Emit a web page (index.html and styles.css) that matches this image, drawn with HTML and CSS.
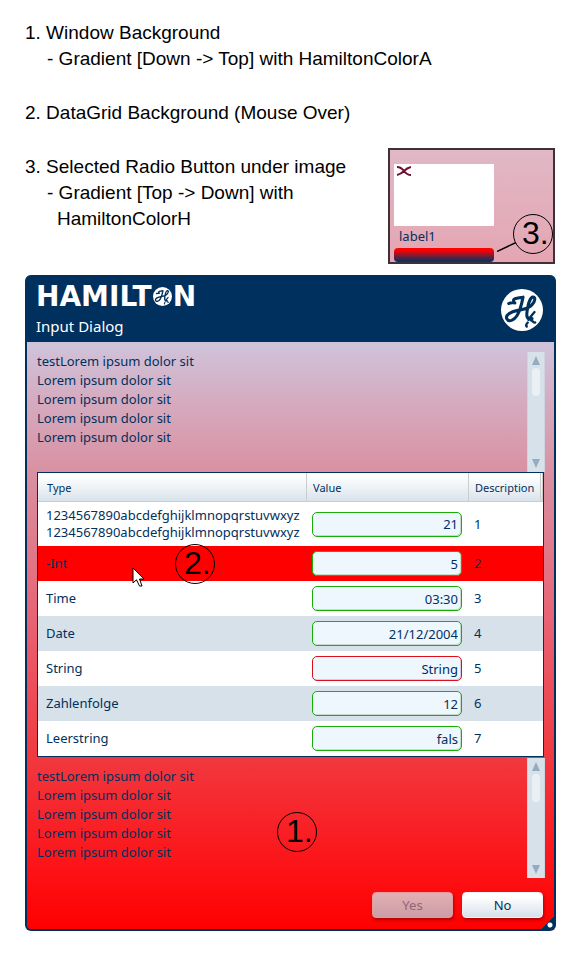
FILE: index.html
```html
<!DOCTYPE html>
<html lang="en">
<head>
<meta charset="utf-8">
<meta name="viewport" content="width=device-width, initial-scale=1">
<title>Input Dialog</title>
<link rel="stylesheet" href="styles.css">
</head>
<body>
<svg class="defs" aria-hidden="true">
  <symbol id="monogram" viewBox="0 0 124 124">
    <circle cx="62" cy="62" r="62" fill="#fff"/>
    <g fill="none" stroke="#00305d" stroke-linecap="round" stroke-linejoin="round">
      <path stroke-width="9" d="M23 43C28 39 35 41 41 41C36 37 34 31 44 28C52 26 60 25 65 24C61 45 56 65 47 79C39 92 23 99 17 88C12 76 28 68 50 63C67 59 84 58 92 46C101 35 103 24 94 24C85 25 79 51 77 66C75 79 77 89 82 86"/>
      <path stroke-width="7" d="M99 68C92 76 86 83 81 91M84 88C92 83 97 88 88 92C94 94 97 101 101 99M79 99C75 103 73 108 76 111"/>
    </g>
  </symbol>
</svg>
<main class="page">
  <section class="intro">
    <div class="notes">
      <div class="note">
        <p>1. Window Background</p>
        <p class="detail">- Gradient [Down -&gt; Top] with HamiltonColorA</p>
      </div>
      <div class="note">
        <p>2. DataGrid Background (Mouse Over)</p>
      </div>
      <div class="note">
        <p>3. Selected Radio Button under image</p>
        <p class="detail">- Gradient [Top -&gt; Down] with</p>
        <p class="detail more">HamiltonColorH</p>
      </div>
    </div>
    <div class="sample">
      <label class="choice">
        <span class="image">
          <svg width="14" height="10" viewBox="0 0 14 10" aria-hidden="true"><path d="M0 1Q4 1 7 5T14 9M0 9Q4 8 7 5T14 1" fill="none" stroke="#701030" stroke-width="2"/></svg>
        </span>
        <span class="caption">label1</span>
        <input type="radio" name="choice" checked>
      </label>
      <svg class="leader" width="20" height="10" viewBox="0 0 20 10" aria-hidden="true"><path d="M0 9.500L19 .5" stroke="#000" stroke-width="1.500"/></svg>
      <span class="marker marker-3">3.</span>
    </div>
  </section>

  <section class="window">
    <header class="titlebar">
      <div>
        <div class="brand"><span>HAMILT</span><svg width="19" height="19" aria-hidden="true"><use href="#monogram"/></svg><span>N</span></div>
        <h1>Input Dialog</h1>
      </div>
      <svg class="emblem" width="42" height="42" aria-hidden="true"><use href="#monogram"/></svg>
    </header>
    <div class="content">
      <div class="pane">
        <div class="lines">
          <p>testLorem ipsum dolor sit</p><p>Lorem ipsum dolor sit</p><p>Lorem ipsum dolor sit</p><p>Lorem ipsum dolor sit</p><p>Lorem ipsum dolor sit</p>
        </div>
        <div class="scrollbar"><button class="up" aria-label="Scroll up"></button><span class="thumb"></span><button class="down" aria-label="Scroll down"></button></div>
      </div>

      <table class="grid">
        <colgroup><col class="col-type"><col class="col-value"><col></colgroup>
        <thead><tr><th>Type</th><th>Value</th><th>Description</th></tr></thead>
        <tbody>
          <tr class="tall"><td>1234567890abcdefghijklmnopqrstuvwxyz<br>1234567890abcdefghijklmnopqrstuvwxyz</td><td><input type="text" aria-label="Value 1" value="21"></td><td>1</td></tr>
          <tr class="hover"><td>-Int<span class="marker marker-2">2.</span>
            <svg class="pointer" width="13" height="20" viewBox="0 0 13 20" aria-hidden="true"><path d="M1 1V16L4.500 12.800L7.500 19H10L7.500 12H12Z" fill="#fff" stroke="#000"/></svg></td><td><input type="text" aria-label="Value 2" value="5"></td><td>2</td></tr>
          <tr><td>Time</td><td><input type="text" aria-label="Value 3" value="03:30"></td><td>3</td></tr>
          <tr><td>Date</td><td><input type="text" aria-label="Value 4" value="21/12/2004"></td><td>4</td></tr>
          <tr><td>String</td><td><input class="invalid" type="text" aria-label="Value 5" value="String"></td><td>5</td></tr>
          <tr><td>Zahlenfolge</td><td><input type="text" aria-label="Value 6" value="12"></td><td>6</td></tr>
          <tr><td>Leerstring</td><td><input type="text" aria-label="Value 7" value="fals"></td><td>7</td></tr>
        </tbody>
      </table>

      <div class="pane lower">
        <div class="lines">
          <p>testLorem ipsum dolor sit</p><p>Lorem ipsum dolor sit</p><p>Lorem ipsum dolor sit</p><p>Lorem ipsum dolor sit</p><p>Lorem ipsum dolor sit</p>
        </div>
        <span class="marker marker-1">1.</span>
        <div class="scrollbar"><button class="up" aria-label="Scroll up"></button><span class="thumb"></span><button class="down" aria-label="Scroll down"></button></div>
      </div>

      <div class="actions">
        <button class="action" disabled>Yes</button>
        <button class="action">No</button>
      </div>
    </div>
    <span class="grip"></span>
  </section>
</main>
</body>
</html>
```
FILE: styles.css
```css
:root {
  --navy: #00305d;
  --stripe: #d7e1ea;
  --ui: "Noto Sans", "DejaVu Sans Condensed", sans-serif;
}
* { box-sizing: border-box; }
body { margin: 0; background: #fff; color: var(--navy); font: 13px/19px var(--ui); }
p, h1 { margin: 0; font-weight: normal; }
button, input { font: inherit; color: inherit; margin: 0; }
.defs { position: absolute; width: 0; height: 0; }
.page { padding: 20px 25px 24px; }

.intro { display: flex; justify-content: space-between; align-items: flex-end; height: 244px; margin-bottom: 11px; }
.notes { align-self: flex-start; display: flex; flex-direction: column; gap: 28px; width: 0; color: #000; font: 19px/26px "Liberation Sans", sans-serif; white-space: nowrap; }
.detail { padding-left: 22px; }
.more { padding-left: 32px; }

.sample { position: relative; width: 167px; height: 116px; margin-right: 1px; padding: 14px 4px 0; border: 2px solid #403038; background: linear-gradient(#e0b8c6, #e5a5b2); }
.choice { display: flex; flex-direction: column; width: 100px; }
.image { display: block; height: 62px; padding: 2px 3px; background: #fff; line-height: 10px; }
.caption { padding-left: 5px; line-height: 20px; }
.choice input { appearance: none; width: 100%; height: 14px; margin-top: 2px; border-radius: 4px; background: linear-gradient(#f00 15%, #10305d 90%); }
.leader { position: absolute; left: 107px; top: 92px; }
.marker { position: absolute; width: 40px; height: 40px; padding-left: 8px; border: 1px solid #000; border-radius: 50%; color: #000; font: 32px/37px "Liberation Sans", sans-serif; }
.marker-3 { left: 123px; top: 64px; }

.window { position: relative; border: solid var(--navy); border-width: 0 2px 2px; border-radius: 6px; overflow: hidden; background: var(--navy); }
.titlebar { display: flex; justify-content: space-between; align-items: center; height: 67px; padding: 2px 11px 0 9px; color: #fff; }
.brand { display: flex; align-items: center; gap: 1px; height: 26px; margin-top: 6px; font: bold 28px/26px "DejaVu Sans", sans-serif; }
h1 { font-size: 15px; line-height: 32px; }
.content { padding: 10px 9px 11px 10px; background: linear-gradient(#cfc4dc, #d5abbf 10%, #d98fa0 23%, #e86070 49%, #f1383e 71%, #fc1216 90%, #f00); }

.pane { position: relative; display: flex; justify-content: space-between; height: 120px; }
.lower { margin-top: 1px; }
.lower .lines { padding-top: 9px; }
.scrollbar { display: flex; flex-direction: column; align-items: center; width: 18px; height: 120px; padding: 4px 0; border: 1px solid #ccd4e2; border-width: 0 1px; background: var(--stripe); }
.scrollbar button { width: 8px; height: 9px; padding: 0; border: 0; background: #95abc1; }
.up { clip-path: polygon(50% 0, 100% 100%, 0 100%); }
.down { clip-path: polygon(0 0, 100% 0, 50% 100%); margin-top: auto; }
.thumb { width: 8px; height: 28px; margin-top: 3px; border-radius: 4px; background: #ebf0f5; }

.grid { width: calc(100% - 1px); table-layout: fixed; border-collapse: separate; border-spacing: 0; border: 1px solid var(--navy); background: #fff; line-height: 17px; }
.col-type { width: 268px; }
.col-value { width: 162px; }
.grid th { height: 29px; padding: 0 6px; border: solid #ccc; border-width: 0 0 1px 1px; background: linear-gradient(#fff 10%, #d9e3ec); font-size: 11px; font-weight: normal; text-align: left; }
.grid th:first-child { padding-left: 9px; border-left: 0; }
.grid th:last-child { border-right: 3px double #ccc; padding-right: 0; }
.grid td { height: 35px; padding: 0 6px; }
.grid td:first-child { position: relative; padding-left: 8px; padding-right: 0; white-space: nowrap; }
.grid .tall td { height: 44px; }
.grid tbody tr:nth-child(even) { background: var(--stripe); }
.grid tbody tr.hover { background: #f00; }
.grid input { display: block; width: 150px; height: 25px; padding: 0 3px; border: 1px solid #18ad08; border-radius: 5px; outline: 0; background: #eef6fe; box-shadow: inset -1px -1px #c5dccb; text-align: right; }
.grid input.invalid { border-color: #d81020; box-shadow: inset -1px -1px #dccbd3; }
.marker-2 { left: 137px; top: -2px; }
.pointer { position: absolute; left: 94px; top: 21px; }
.marker-1 { left: 240px; top: 54px; }

.actions { display: flex; justify-content: flex-end; gap: 9px; padding: 14px 2px 0 0; }
.action { width: 81px; height: 26px; padding: 0; border: 1px solid #f0f4f8; border-radius: 4px; background: linear-gradient(#fff 15%, #d7e1ea); box-shadow: 1px 2px 3px #80000099; }
.action:disabled { border-color: #e59a9e; background: linear-gradient(#e2b0b4, #cb9da5); color: #916579; }
.grip { position: absolute; right: -2px; bottom: -2px; width: 16px; height: 16px; background: radial-gradient(circle at 10px 10px, #fff 2px, transparent 3px), linear-gradient(135deg, transparent 50%, var(--navy) 50%); }
```
